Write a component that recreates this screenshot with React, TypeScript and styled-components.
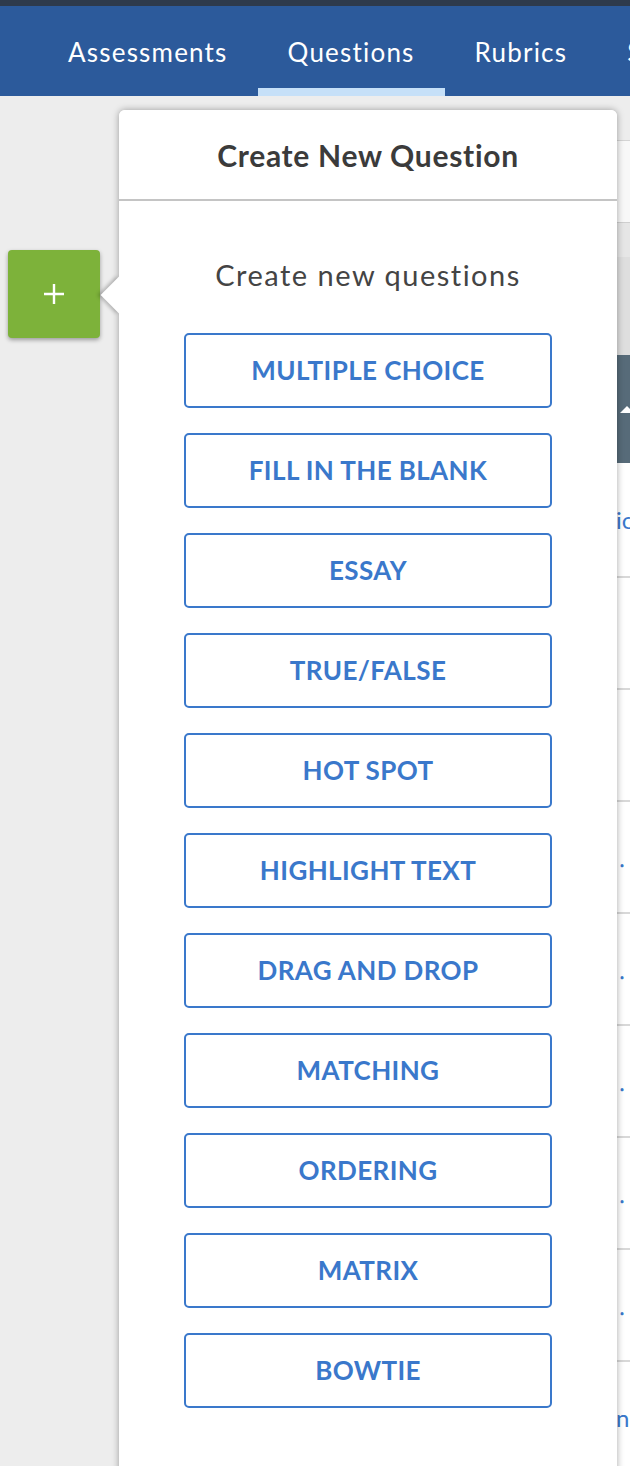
import React from "react";
import styled, { createGlobalStyle } from "styled-components";

const GlobalStyle = createGlobalStyle`
  html, body {
    margin: 0;
    padding: 0;
    background: #ededed;
    font-family: Lato, "Open Sans", sans-serif;
  }
  * {
    box-sizing: border-box;
  }
`;

const Page = styled.div`
  position: relative;
  width: 630px;
  height: 1466px;
  overflow: hidden;
  background: #ededed;
`;

const TopStrip = styled.div`
  height: 6px;
  background: #2e3a4b;
`;

const NavBar = styled.nav`
  display: flex;
  height: 90px;
  padding-left: 38px;
  background: #2c5a9b;
`;

const NavTab = styled.div<{ $active?: boolean }>`
  display: flex;
  align-items: center;
  padding: 10px 30px 0;
  border-bottom: 8px solid ${(p) => (p.$active ? "#c6e0f8" : "transparent")};
  color: #ffffff;
  font-size: 26px;
  letter-spacing: 1.2px;
  white-space: nowrap;
`;

const Main = styled.div`
  display: flex;
`;

const Sidebar = styled.div`
  flex: 0 0 130px;
  padding: 154px 0 0 8px;
`;

const AddButton = styled.div`
  display: flex;
  align-items: center;
  justify-content: center;
  width: 92px;
  height: 88px;
  border-radius: 4px;
  background: #7db23a;
  box-shadow: 0 2px 4px rgba(0, 0, 0, 0.35);
`;

const Content = styled.div`
  flex: 1;
  padding-top: 44px;
`;

const Toolbar = styled.div`
  height: 82px;
  border-top: 1px solid #d4d4d4;
  background: #f8f8f8;
`;

const FilterBar = styled.div`
  height: 35px;
  border-top: 1px solid #cfcfcf;
  background: #e6e6e6;
`;

const FilterBody = styled.div`
  height: 98px;
  background: #dedede;
`;

const TableHead = styled.div`
  display: grid;
  grid-template-columns: 486px 1fr;
  align-items: center;
  height: 108px;
  background: #576b79;
`;

const SortCaret = styled.div`
  width: 0;
  height: 0;
  margin-left: 4px;
  border-left: 7px solid transparent;
  border-right: 7px solid transparent;
  border-bottom: 7px solid #ffffff;
`;

const Row = styled.div<{ $first?: boolean }>`
  display: grid;
  grid-template-columns: 486px 1fr;
  align-items: center;
  height: ${(p) => (p.$first ? "115px" : "112px")};
  border-bottom: 2px solid #d8d8d8;
  background: #ffffff;
`;

const RowLink = styled.span`
  color: #3a78cb;
  font-size: 24px;
  white-space: nowrap;
`;

const Popover = styled.div`
  position: absolute;
  top: 110px;
  left: 119px;
  width: 498px;
  height: 1400px;
  border-radius: 6px;
  background: #ffffff;
  box-shadow: 0 0 7px rgba(0, 0, 0, 0.35);

  &::before {
    content: "";
    position: absolute;
    top: 172px;
    left: -13px;
    width: 26px;
    height: 26px;
    background: #ffffff;
    transform: rotate(45deg);
    box-shadow: -2px 2px 4px rgba(0, 0, 0, 0.25);
  }
`;

const PopoverInner = styled.div`
  position: relative;
  display: flex;
  flex-direction: column;
  align-items: center;
  border-radius: 6px;
  background: #ffffff;
`;

const PopoverHeader = styled.div`
  display: flex;
  align-items: center;
  justify-content: center;
  width: 100%;
  height: 91px;
  border-bottom: 2px solid #c4c4c4;
  color: #3b3b3b;
  font-size: 30px;
  font-weight: 700;
  letter-spacing: 0.7px;
`;

const Intro = styled.div`
  margin: 58px 0 42px;
  line-height: 32px;
  color: #444444;
  font-size: 29px;
  letter-spacing: 1.5px;
`;

const TypeList = styled.div`
  display: flex;
  flex-direction: column;
  gap: 25px;
`;

const TypeButton = styled.button`
  width: 368px;
  height: 75px;
  padding-bottom: 2px;
  border: 2px solid #3a78cb;
  border-radius: 5px;
  background: #ffffff;
  color: #3a78cb;
  font-family: Lato, "Open Sans", sans-serif;
  font-size: 26px;
  font-weight: 700;
  letter-spacing: 0.4px;
  text-transform: uppercase;
  cursor: pointer;
`;

const tabs = ["Assessments", "Questions", "Rubrics", "Settings"];

const rows = ["ic", "", "", "\u2024", "\u2024", "\u2024", "\u2024", "\u2024", "n"];

const types = [
  "Multiple Choice",
  "Fill in the Blank",
  "Essay",
  "True/False",
  "Hot Spot",
  "Highlight Text",
  "Drag and Drop",
  "Matching",
  "Ordering",
  "Matrix",
  "Bowtie",
];

const App = () => (
  <Page>
    <GlobalStyle />
    <TopStrip />
    <NavBar>
      {tabs.map((t) => (
        <NavTab key={t} $active={t === "Questions"}>
          {t}
        </NavTab>
      ))}
    </NavBar>
    <Main>
      <Sidebar>
        <AddButton>
          <svg width="22" height="22" viewBox="0 0 22 22">
            <path d="M11 1v20M1 11h20" stroke="#ffffff" strokeWidth="2.4" />
          </svg>
        </AddButton>
      </Sidebar>
      <Content>
        <Toolbar />
        <FilterBar />
        <FilterBody />
        <TableHead>
          <span />
          <SortCaret />
        </TableHead>
        {rows.map((r, i) => (
          <Row key={i} $first={i === 0}>
            <span />
            <RowLink>{r}</RowLink>
          </Row>
        ))}
      </Content>
    </Main>
    <Popover>
      <PopoverInner>
        <PopoverHeader>Create New Question</PopoverHeader>
        <Intro>Create new questions</Intro>
        <TypeList>
          {types.map((t) => (
            <TypeButton key={t}>{t}</TypeButton>
          ))}
        </TypeList>
      </PopoverInner>
    </Popover>
  </Page>
);

export default App;
